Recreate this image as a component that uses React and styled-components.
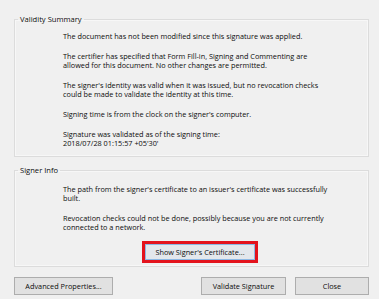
import React from "react";
import styled, { createGlobalStyle } from "styled-components";

const GlobalStyle = createGlobalStyle`
  body {
    margin: 0;
    background: #f0f0f0;
  }
`;

const Dialog = styled.div`
  width: 379px;
  height: 299px;
  box-sizing: border-box;
  padding: 14px 10px 0 14px;
  display: flex;
  flex-direction: column;
  font-family: "Open Sans", "Noto Sans", sans-serif;
  font-size: 7.3px;
  color: #0c0c0c;
`;

const Group = styled.fieldset`
  margin: ${(p) => p.$gap || 0}px 0 0 0;
  padding: 0;
  min-width: 0;
  border: 1px solid #dcdcdc;
  box-shadow: inset 0 0 0 1px #f7f7f7;
`;

const Legend = styled.legend`
  margin-left: 3px;
  padding: 0 2px;
  line-height: 11px;
  font-size: 7.6px;
`;

const Body = styled.div`
  padding: ${(p) => p.$top}px 31px ${(p) => p.$bottom}px 48px;
  display: flex;
  flex-direction: column;
  gap: 11px;
`;

const Para = styled.p`
  margin: 0;
  line-height: 9px;
  white-space: nowrap;
`;

const ButtonRow = styled.div`
  display: flex;
  justify-content: center;
  margin-top: 1px;
`;

const Button = styled.button`
  box-sizing: border-box;
  width: ${(p) => p.$w}px;
  height: ${(p) => p.$h || 18}px;
  padding: 0;
  font: inherit;
  color: #0c0c0c;
  background: ${(p) => (p.$focus ? "#e3e7ec" : "#e1e1e1")};
  border: 1px solid ${(p) => (p.$focus ? "#8cb8e4" : "#adadad")};
  outline: ${(p) => (p.$marked ? "3px solid #e3131d" : "none")};
  outline-offset: 0;
`;

const Footer = styled.div`
  display: flex;
  gap: 9px;
  margin-top: 10px;
`;

const Spacer = styled.div`
  flex: 1;
`;

export default function App() {
  return (
    <>
      <GlobalStyle />
      <Dialog>
        <Group>
          <Legend>Validity Summary</Legend>
          <Body $top={7} $bottom={8}>
            <Para>The document has not been modified since this signature was applied.</Para>
            <Para>
              The certifier has specified that Form Fill-in, Signing and Commenting are
              <br />
              allowed for this document. No other changes are permitted.
            </Para>
            <Para>
              The signer's identity was valid when it was issued, but no revocation checks
              <br />
              could be made to validate the identity at this time.
            </Para>
            <Para>Signing time is from the clock on the signer's computer.</Para>
            <Para>
              Signature was validated as of the signing time:
              <br />
              2018/07/28 01:15:57 +05'30'
            </Para>
          </Body>
        </Group>
        <Group $gap={8}>
          <Legend>Signer Info</Legend>
          <Body $top={9} $bottom={6}>
            <Para>
              The path from the signer's certificate to an issuer's certificate was successfully
              <br />
              built.
            </Para>
            <Para>
              Revocation checks could not be done, possibly because you are not currently
              <br />
              connected to a network.
            </Para>
            <ButtonRow>
              <Button $w={110} $h={16} $focus $marked>
                Show Signer's Certificate...
              </Button>
            </ButtonRow>
          </Body>
        </Group>
        <Footer>
          <Button $w={99}>Advanced Properties...</Button>
          <Spacer />
          <Button $w={85}>Validate Signature</Button>
          <Button $w={74}>Close</Button>
        </Footer>
      </Dialog>
    </>
  );
}
